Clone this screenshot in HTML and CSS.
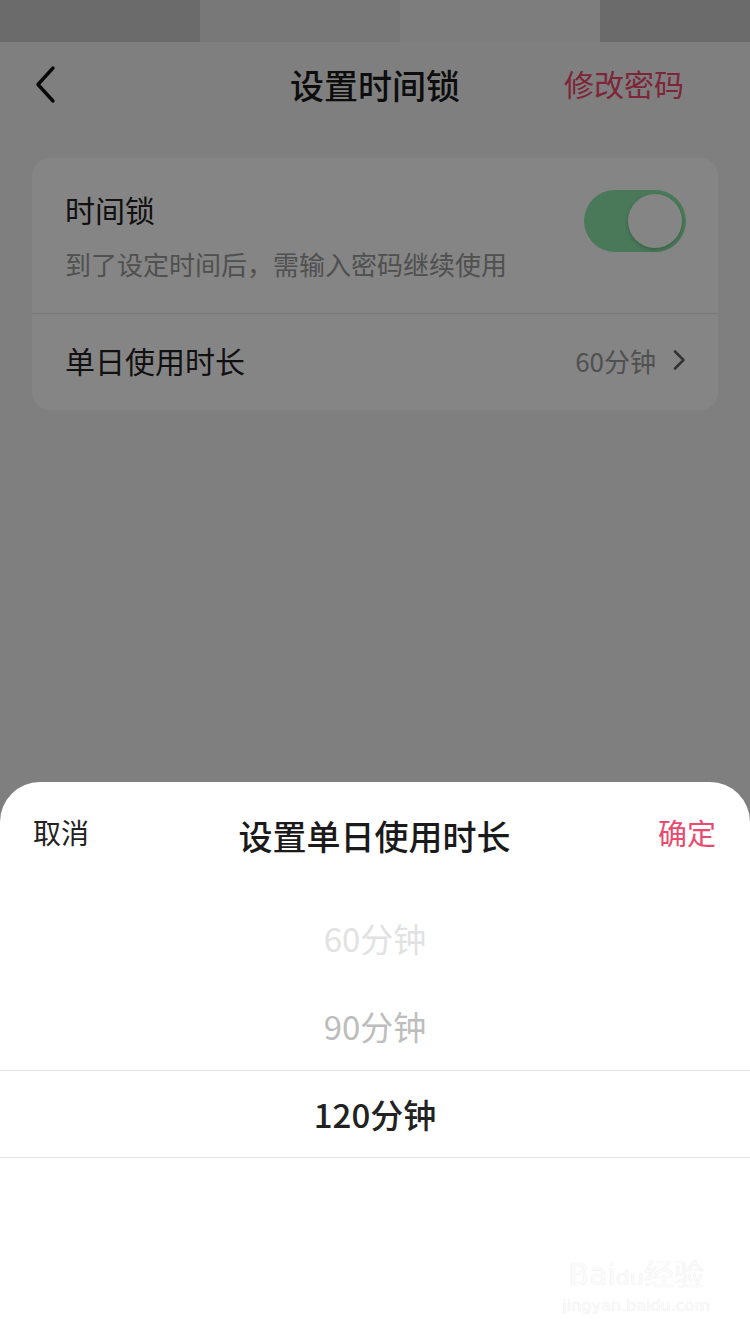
FILE: index.html
```html
<!DOCTYPE html>
<html lang="zh-CN">
<head>
    <meta charset="UTF-8">
    <meta name="viewport" content="width=device-width, initial-scale=1.0">
    <title>设置时间锁</title>
    <link rel="stylesheet" href="styles.css">
</head>
<body>
    <div class="screen">
        <div class="status-bar">
            <div class="blur blur-dark"></div>
            <div class="blur blur-mid"></div>
            <div class="blur blur-light"></div>
            <div class="blur blur-dark blur-end"></div>
        </div>

        <div class="nav">
            <div class="nav-back">
                <svg width="24" height="40" viewBox="0 0 24 40">
                    <path d="M19 3 L4 19.5 L19 36" fill="none" stroke="#111" stroke-width="3.4" stroke-linecap="round" stroke-linejoin="round"/>
                </svg>
            </div>
            <div class="nav-title">设置时间锁</div>
            <div class="nav-action">修改密码</div>
        </div>

        <div class="card">
            <div class="row row-lock">
                <div class="row-text">
                    <div class="row-title">时间锁</div>
                    <div class="row-desc">到了设定时间后，需输入密码继续使用</div>
                </div>
                <div class="switch">
                    <div class="switch-knob"></div>
                </div>
            </div>
            <div class="row row-duration">
                <div class="row-title">单日使用时长</div>
                <div class="row-value">
                    <span>60分钟</span>
                    <svg width="14" height="22" viewBox="0 0 14 22">
                        <path d="M3 2.5 L11.5 11 L3 19.5" fill="none" stroke="#666" stroke-width="2.6" stroke-linecap="round" stroke-linejoin="round"/>
                    </svg>
                </div>
            </div>
        </div>

        <div class="mask"></div>

        <div class="sheet">
            <div class="sheet-header">
                <div class="sheet-cancel">取消</div>
                <div class="sheet-title">设置单日使用时长</div>
                <div class="sheet-confirm">确定</div>
            </div>
            <div class="picker">
                <div class="picker-item faded-2">60分钟</div>
                <div class="picker-item faded-1">90分钟</div>
                <div class="picker-item selected">120分钟</div>
                <div class="picker-item"></div>
            </div>
            <div class="watermark">
                <div class="watermark-logo">Bai<span class="paw">du</span>经验</div>
                <div class="watermark-url">jingyan.baidu.com</div>
            </div>
        </div>
    </div>
</body>
</html>
```

FILE: styles.css
```css
body {
    margin: 0;
    padding: 0;
    font-family: "Noto Sans CJK SC", "Noto Sans", sans-serif;
    background-color: #fff;
}

.screen {
    position: relative;
    width: 750px;
    height: 1334px;
    overflow: hidden;
    background-color: #f4f4f4;
}

/* status bar (blurred in the capture) */
.status-bar {
    display: flex;
    height: 42px;
}

.blur {
    width: 200px;
}

.blur-dark {
    background-color: #cecece;
}

.blur-mid {
    background-color: #e6e6e6;
}

.blur-light {
    background-color: #f0f0f0;
}

.blur-end {
    width: 150px;
}

/* navigation */
.nav {
    display: grid;
    grid-template-columns: 1fr auto 1fr;
    align-items: center;
    height: 86px;
    padding: 0 34px;
}

.nav-back {
    display: flex;
    align-items: center;
}

.nav-title {
    font-size: 34px;
    font-weight: 500;
    color: #1a1a1a;
    line-height: 48px;
    margin-top: 0;
}

.nav-action {
    justify-self: end;
    margin-right: 32px;
    font-size: 30px;
    color: #f0476d;
    line-height: 44px;
    margin-top: -4px;
}

/* settings card */
.card {
    margin: 30px 32px 0;
    background-color: #fff;
    border-radius: 18px;
}

.row {
    display: flex;
    justify-content: space-between;
    padding: 0 32px 0 33px;
}

.row-lock {
    align-items: flex-start;
    height: 156px;
    border-bottom: 1px solid #e6e6e6;
    box-sizing: border-box;
}

.row-text {
    padding-top: 31px;
}

.row-title {
    font-size: 30px;
    color: #222;
    line-height: 40px;
}

.row-desc {
    margin-top: 20px;
    font-size: 26px;
    color: #999;
    line-height: 30px;
}

.switch {
    display: flex;
    justify-content: flex-end;
    align-items: center;
    width: 102px;
    height: 62px;
    margin-top: 32px;
    padding: 0 4px;
    border-radius: 31px;
    background-color: #8ce8aa;
    box-sizing: border-box;
}

.switch-knob {
    width: 54px;
    height: 54px;
    border-radius: 50%;
    background-color: #fff;
    box-shadow: 0 2px 4px rgba(0, 0, 0, 0.2);
}

.row-duration {
    align-items: center;
    height: 96px;
}

.row-duration .row-title {
    margin-top: -4px;
}

.row-value {
    display: flex;
    align-items: center;
    gap: 16px;
    font-size: 26px;
    color: #999;
    margin-top: -4px;
}

/* dimmed backdrop behind the sheet */
.mask {
    position: absolute;
    inset: 0;
    background-color: rgba(0, 0, 0, 0.48);
}

/* bottom sheet */
.sheet {
    position: absolute;
    left: 0;
    right: 0;
    bottom: 0;
    height: 552px;
    background-color: #fff;
    border-radius: 40px 40px 0 0;
}

.sheet-header {
    display: grid;
    grid-template-columns: 1fr auto 1fr;
    align-items: flex-start;
    height: 112px;
    padding: 30px 34px 0 33px;
    box-sizing: border-box;
}

.sheet-cancel {
    font-size: 28px;
    color: #222;
    line-height: 40px;
}

.sheet-title {
    font-size: 34px;
    font-weight: 500;
    color: #1a1a1a;
    line-height: 48px;
}

.sheet-confirm {
    justify-self: end;
    font-size: 29px;
    color: #ea4a6e;
    line-height: 40px;
}

.picker-item {
    display: flex;
    justify-content: center;
    align-items: center;
    height: 88px;
    font-size: 33px;
    color: #222;
    box-sizing: border-box;
}

.faded-2 {
    color: #e2e2e2;
}

.faded-1 {
    color: #bdbdbd;
}

.selected {
    font-weight: 500;
    border-top: 1px solid #e2e2e2;
    border-bottom: 1px solid #e2e2e2;
}

.watermark {
    position: absolute;
    right: 40px;
    bottom: 18px;
    text-align: center;
    color: #fbfbfb;
    text-shadow: 0 0 1px #e0e0e0;
}

.watermark-logo {
    font-family: "DejaVu Sans", sans-serif;
    font-size: 30px;
    line-height: 36px;
}

.paw {
    font-size: 22px;
}

.watermark-url {
    font-family: "DejaVu Sans", sans-serif;
    font-size: 16px;
    line-height: 20px;
}
```
